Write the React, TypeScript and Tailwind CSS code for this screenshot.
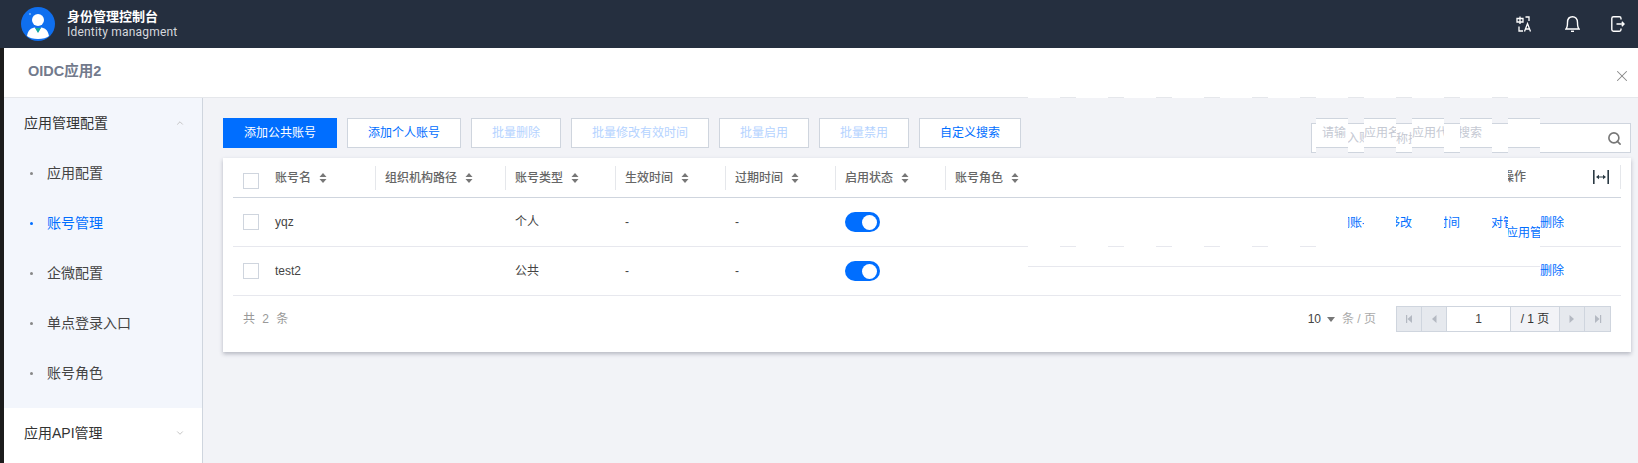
import React from 'react';
import { ChevronDown, ChevronUp, Search, X } from 'lucide-react';

const font = { fontFamily: '"Liberation Sans", "Noto Sans CJK SC", sans-serif' };

const Sort = () => (
    <svg width="8" height="10" viewBox="0 0 8 10" className="shrink-0 ml-2">
        <path d="M4 0 L7.5 4 L0.5 4 Z M4 10 L7.5 6 L0.5 6 Z" fill="#777777" />
    </svg>
);

const Checkbox = () => <span className="block w-4 h-4 border border-[#cfd5de] bg-white" />;

const Toggle = () => (
    <span className="flex items-center justify-end w-[35px] h-5 rounded-full bg-[#006eff] pr-[3px]">
        <span className="block w-[15px] h-[15px] rounded-full bg-white" />
    </span>
);

const Logo = () => (
    <svg width="34" height="34" viewBox="0 0 34 34">
        <circle cx="17" cy="17" r="17" fill="#0f6fef" />
        <circle cx="17" cy="13" r="6" fill="#ffffff" />
        <path d="M6 29 C7 23 10 21 14 20.5 L17 25 L20 20.5 C24 21 27 23 28 29 C24 33 10 33 6 29 Z" fill="#ffffff" />
        <path d="M14 21 L20 21 L17 26 Z" fill="#12a89d" />
        <circle cx="9" cy="7" r="1" fill="#7db4f8" />
    </svg>
);

const LangIcon = () => (
    <svg width="16" height="16" viewBox="0 0 16 16" fill="none" stroke="#ffffff" strokeWidth="1.3">
        <path d="M1 2.5 H7 V6 H1 Z M4 0.5 V8" />
        <path d="M9.5 1 H13 V5" />
        <path d="M7 15 H3 V10.5" />
        <path d="M8.5 15.5 L11.5 7.5 L14.5 15.5 M9.5 13 H13.5" />
    </svg>
);

const BellIcon = () => (
    <svg width="15" height="16" viewBox="0 0 15 16" fill="none" stroke="#ffffff" strokeWidth="1.4">
        <path d="M1 13 H14 C12.6 11.5 12.5 10 12.5 6.5 C12.5 3 10.5 0.8 7.5 0.8 C4.5 0.8 2.5 3 2.5 6.5 C2.5 10 2.4 11.5 1 13 Z" />
        <path d="M6 15.3 H9" />
    </svg>
);

const ExitIcon = () => (
    <svg width="14" height="16" viewBox="0 0 14 16" fill="none" stroke="#ffffff" strokeWidth="1.4">
        <path d="M10 3.5 V2.5 C10 1.5 9.4 0.8 8.4 0.8 H2.5 C1.5 0.8 0.8 1.5 0.8 2.5 V13.5 C0.8 14.5 1.5 15.2 2.5 15.2 H8.4 C9.4 15.2 10 14.5 10 13.5 V12.5" />
        <path d="M5.5 8 H13 M10.8 5.8 L13 8 L10.8 10.2" />
    </svg>
);

const FitIcon = () => (
    <svg width="16" height="14" viewBox="0 0 16 14" fill="#2b3a44">
        <rect x="0" y="0" width="1.6" height="14" />
        <rect x="14.4" y="0" width="1.6" height="14" />
        <path d="M3 7 L6 4.8 V6.4 H10 V4.8 L13 7 L10 9.2 V7.6 H6 V9.2 Z" />
    </svg>
);

const PageBtn = ({ d }: { d: string }) => (
    <span className="flex items-center justify-center w-[25px] h-full bg-[#e6e9ee] border-r border-[#cfd5de] last:border-r-0">
        <svg width="8" height="10" viewBox="0 0 8 10"><path d={d} fill="#b4b9c2" /></svg>
    </span>
);

// 搜索框和表格右侧被错位切开的小块，按参考图的位置摆放
const Piece = ({ x, y, w, text, off = 0, cls = 'text-[#006eff]' }: { x: number; y: number; w: number; text: string; off?: number; cls?: string }) => (
    <span
        className={`absolute h-5 leading-5 overflow-hidden whitespace-nowrap text-xs ${cls}`}
        style={{ left: x, top: y - 10, width: w, textIndent: off }}
    >
        {text}
    </span>
);

const tiles = [1028, 1076, 1124, 1172, 1220, 1268, 1316, 1364, 1412, 1460, 1508];

const App = () => {
    const menu = ['应用配置', '账号管理', '企微配置', '单点登录入口', '账号角色'];
    const buttons = [
        { label: '添加个人账号', w: 'w-[114px]', cls: 'text-[#006eff]' },
        { label: '批量删除', w: 'w-[90px]', cls: 'text-[#b5d3ff]' },
        { label: '批量修改有效时间', w: 'w-[138px]', cls: 'text-[#b5d3ff]' },
        { label: '批量启用', w: 'w-[90px]', cls: 'text-[#b5d3ff]' },
        { label: '批量禁用', w: 'w-[90px]', cls: 'text-[#b5d3ff]' },
        { label: '自定义搜索', w: 'w-[102px]', cls: 'text-[#006eff]' }
    ];
    const heads = ['组织机构路径', '账号类型', '生效时间', '过期时间', '启用状态', '账号角色'];
    const rows = [
        { name: 'yqz', type: '个人' },
        { name: 'test2', type: '公共' }
    ];
    const grid = 'grid grid-cols-[32px_110px_130px_110px_110px_110px_110px_1fr]';

    return (
        <div className="relative w-[1638px] h-[463px] overflow-hidden flex flex-col bg-[#f2f3f7]" style={font}>
            <header className="h-12 shrink-0 bg-[#252f3f] flex items-center pl-[21px]">
                <Logo />
                <div className="ml-3 flex flex-col">
                    <span className="text-[13px] leading-[16px] font-bold text-white">身份管理控制台</span>
                    <span className="text-xs leading-[14px] text-[#d5d8dd]" style={{ fontFamily: 'Roboto, sans-serif', letterSpacing: '0.2px' }}>Identity managment</span>
                </div>
                <div className="ml-auto flex items-center">
                    <LangIcon />
                    <span className="ml-[33px]"><BellIcon /></span>
                    <span className="ml-[31px] mr-[13px]"><ExitIcon /></span>
                </div>
            </header>

            <div className="flex-1 flex min-h-0">
                <div className="w-1 shrink-0 bg-[#1c1c1c]" />
                <div className="flex-1 flex flex-col min-w-0">
                    <div className="h-[50px] shrink-0 bg-white border-b border-[#e5e7eb] flex items-center pl-6 pr-[7px]">
                        <span className="text-[14.5px] font-bold text-[#727a8c] mb-0.5">OIDC应用2</span>
                        <X size={18} strokeWidth={1.4} className="ml-auto mt-1.5 text-[#888888]" />
                    </div>

                    <div className="flex-1 flex min-h-0">
                        <aside className="w-[199px] shrink-0 bg-white border-r border-[#cfd5de]">
                            <div className="bg-[#f3f6fc] h-[310px]">
                                <div className="h-[50px] flex items-center pl-5 pr-[17px] text-sm text-[#333333]">
                                    应用管理配置
                                    <ChevronUp size={10} className="ml-auto text-[#bbbbbb]" />
                                </div>
                                {menu.map((m, i) => (
                                    <div key={m} className={`h-[50px] flex items-center pl-[26px] text-sm ${i === 1 ? 'text-[#006eff]' : 'text-[#444444]'}`}>
                                        <span className={`block w-[3px] h-[3px] rounded-full mr-[14px] ${i === 1 ? 'bg-[#006eff]' : 'bg-[#888888]'}`} />
                                        {m}
                                    </div>
                                ))}
                            </div>
                            <div className="h-[50px] flex items-center pl-5 pr-[17px] text-sm text-[#333333]">
                                应用API管理
                                <ChevronDown size={10} className="ml-auto text-[#bbbbbb]" />
                            </div>
                        </aside>

                        <main className="flex-1 pl-5 pr-[7px] pt-5 min-w-0">
                            <div className="flex items-start gap-[10px] h-[40px]">
                                <button className="w-[114px] h-[30px] bg-[#006eff] text-white text-xs">添加公共账号</button>
                                {buttons.map((b) => (
                                    <button key={b.label} className={`${b.w} h-[30px] bg-white border border-[#cfd5de] text-xs ${b.cls}`}>{b.label}</button>
                                ))}
                                <div className="relative ml-auto mt-[5px] w-[320px] h-[30px] bg-white border border-[#cfd5de] flex items-center justify-end pr-[8px]">
                                    <Search size={15} strokeWidth={2.6} className="text-[#777777]" />
                                </div>
                            </div>

                            <div className="bg-white h-[194px] shadow-[0_2px_4px_rgba(54,58,80,0.32)] px-[10px]">
                                <div className={`${grid} h-[40px] items-center border-b border-[#cfd5de] text-xs font-medium text-[#666666]`}>
                                    <span className="pl-[10px] pt-[6px]"><Checkbox /></span>
                                    <span className="flex items-center pl-[10px]">账号名<Sort /></span>
                                    {heads.map((h) => (
                                        <span key={h} className="flex items-center h-[24px] border-l border-[#e5e7eb] pl-[9px]">{h}<Sort /></span>
                                    ))}
                                </div>
                                {rows.map((r) => (
                                    <div key={r.name} className={`${grid} h-[49px] items-center border-b border-[#e7e8ee] last:border-[#cfd5de] text-xs text-[#444444]`}>
                                        <span className="pl-[10px]"><Checkbox /></span>
                                        <span className="pl-[10px]">{r.name}</span>
                                        <span />
                                        <span className="pl-[10px]">{r.type}</span>
                                        <span className="pl-[10px]">-</span>
                                        <span className="pl-[10px]">-</span>
                                        <span className="pl-[10px]"><Toggle /></span>
                                        <span />
                                    </div>
                                ))}
                                <div className="flex items-center h-[46px] pl-[10px] pr-[10px] text-xs">
                                    <span className="text-[#999999] tracking-[2px]">共 2 条</span>
                                    <span className="ml-auto text-[#444444]">10</span>
                                    <svg width="8" height="5" viewBox="0 0 8 5" className="ml-[6px] mr-[7px]"><path d="M0 0 H8 L4 5 Z" fill="#777777" /></svg>
                                    <span className="text-[#aaaaaa] mr-5">条 / 页</span>
                                    <div className="flex items-stretch h-[26px] border border-[#cfd5de]">
                                        <PageBtn d="M1 1 H2.2 V9 H1 Z M7 1 L2.5 5 L7 9 Z" />
                                        <PageBtn d="M6.5 1 L2 5 L6.5 9 Z" />
                                        <span className="w-[64px] flex items-center justify-center bg-white border-r border-[#cfd5de] text-[#444444]">1</span>
                                        <span className="w-[49px] flex items-center justify-center bg-[#f2f3f7] border-r border-[#cfd5de] text-[#333333]">/ 1 页</span>
                                        <PageBtn d="M1.5 1 L6 5 L1.5 9 Z" />
                                        <PageBtn d="M1 1 L5.5 5 L1 9 Z M6 1 H7.2 V9 H6 Z" />
                                    </div>
                                </div>
                            </div>
                        </main>
                    </div>
                </div>
            </div>

            {/* 标题栏底线和第一行分隔线上被切掉的小段 */}
            {tiles.map((x) => <span key={x} className="absolute top-[97px] w-8 h-px bg-white" style={{ left: x }} />)}
            {tiles.slice(0, 6).map((x) => <span key={x} className="absolute top-[246px] w-8 h-px bg-white" style={{ left: x }} />)}
            <span className="absolute top-[246px] left-[1316px] w-[224px] h-px bg-white" />
            <span className="absolute top-[266px] left-[1028px] w-[512px] h-px bg-[#e7e8ee]" />

            {/* 搜索框错位 */}
            {[1316, 1364, 1412, 1460, 1508].map((x) => (
                <span key={x} className="absolute top-[118px] w-8 h-[35px] bg-[#f2f3f7]" style={{ left: x }}>
                    <span className="block h-[30px] bg-white border-y border-[#cfd5de]" />
                </span>
            ))}
            <Piece x={1322} y={133} w={26} text="请输" cls="text-[#c5c9d3]" />
            <Piece x={1348} y={138} w={16} text="入账" cls="text-[#c5c9d3]" off={-1} />
            <Piece x={1364} y={133} w={32} text="应用名" cls="text-[#c5c9d3]" />
            <Piece x={1396} y={139} w={16} text="称搜" cls="text-[#c5c9d3]" />
            <Piece x={1412} y={133} w={32} text="应用代" cls="text-[#c5c9d3]" />
            <Piece x={1460} y={133} w={32} text="搜索" cls="text-[#c5c9d3]" off={-2} />

            {/* 表头右侧 */}
            <span className="absolute left-[1620px] top-[165px] w-px h-6 bg-[#e5e7eb]" />
            <Piece x={1348} y={177} w={4} text="⋮" cls="text-[#666666]" />
            <Piece x={1508} y={177} w={18} text="操作" cls="text-[#666666] font-medium" off={-6} />
            <span className="absolute left-[1593px] top-[170px]"><FitIcon /></span>

            {/* 操作列 */}
            <Piece x={1348} y={223} w={16} text="调账-" off={-10} />
            <Piece x={1396} y={223} w={16} text="移改" off={-8} />
            <Piece x={1444} y={223} w={16} text="时间" off={-8} />
            <Piece x={1492} y={223} w={16} text="对管" off={-1} />
            <Piece x={1508} y={233} w={32} text="应用管理" off={-2} />
            <Piece x={1540} y={223} w={24} text="删除" />
            <Piece x={1540} y={271} w={24} text="删除" />
        </div>
    );
};

export default App;
